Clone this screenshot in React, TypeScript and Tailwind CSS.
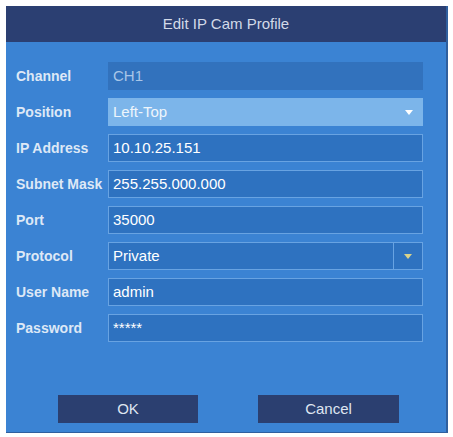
const rows = [
  { label: 'Channel', value: 'CH1', kind: 'disabled' },
  { label: 'Position', value: 'Left-Top', kind: 'select-light' },
  { label: 'IP Address', value: '10.10.25.151', kind: 'input' },
  { label: 'Subnet Mask', value: '255.255.000.000', kind: 'input' },
  { label: 'Port', value: '35000', kind: 'input' },
  { label: 'Protocol', value: 'Private', kind: 'select' },
  { label: 'User Name', value: 'admin', kind: 'input' },
  { label: 'Password', value: '*****', kind: 'input' },
];

function Field({ value, kind }: { value: string; kind: string }) {
  if (kind === 'disabled') {
    return (
      <div className="flex h-full w-[315px] items-center bg-[#3272bd] px-[5px] text-[#a9c6e8]">
        {value}
      </div>
    );
  }
  if (kind === 'select-light') {
    return (
      <div className="flex h-full w-[315px] items-center justify-between bg-[#7cb5ea] pl-[5px] pr-[10px] text-[#eef5fc]">
        <span>{value}</span>
        <svg width="8" height="5" viewBox="0 0 8 5">
          <path d="M0 0h8L4 5z" fill="#ffffff" />
        </svg>
      </div>
    );
  }
  if (kind === 'select') {
    return (
      <div className="flex h-full w-[315px] border border-[#68a3e2] bg-[#2e72c0] text-white">
        <span className="flex flex-1 items-center px-[4px]">{value}</span>
        <div className="flex w-[29px] items-center justify-center border-l border-[#68a3e2]">
          <svg width="8" height="5" viewBox="0 0 8 5">
            <path d="M0 0h8L4 5z" fill="#d9d28a" />
          </svg>
        </div>
      </div>
    );
  }
  return (
    <div className="flex h-full w-[315px] items-center border border-[#68a3e2] bg-[#2e72c0] px-[4px] text-white">
      {value}
    </div>
  );
}

export default function App() {
  return (
    <div className="h-[437px] w-[453px] bg-white p-[6px] font-['Liberation_Sans',Arial,sans-serif] text-[15px]">
      <div className="flex h-[427px] w-[442px] flex-col border-r-2 border-b border-[#2f5f9e] bg-[#3b83d3]">
        {/* Title bar */}
        <div className="flex h-[36px] items-center justify-center bg-[#2b3f72] text-[15px] text-[#d3dae8]">
          Edit IP Cam Profile
        </div>

        {/* Form */}
        <div className="flex flex-col gap-[8px] pt-[20px] pl-[10px]">
          {rows.map((r) => (
            <div key={r.label} className="flex h-[28px] items-center">
              <span className="w-[92px] text-[14px] font-bold whitespace-nowrap text-[#dde8f6]">{r.label}</span>
              <Field value={r.value} kind={r.kind} />
            </div>
          ))}
        </div>

        {/* Buttons */}
        <div className="mt-auto flex gap-[60px] pb-[9px] pl-[52px]">
          <button className="h-[28px] w-[140px] bg-[#2b3f70] text-[15px] text-[#dfe5f0]">OK</button>
          <button className="h-[28px] w-[141px] bg-[#2b3f70] text-[15px] text-[#dfe5f0]">Cancel</button>
        </div>
      </div>
    </div>
  );
}
